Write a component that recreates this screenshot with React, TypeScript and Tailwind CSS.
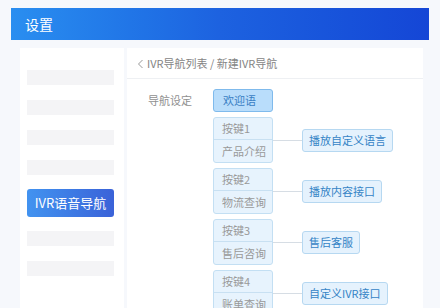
import React from 'react';

const font = { fontFamily: '"Noto Sans CJK SC", "Noto Sans", sans-serif' };

const keys = [
  { key: '按键1', name: '产品介绍', action: '播放自定义语言' },
  { key: '按键2', name: '物流查询', action: '播放内容接口' },
  { key: '按键3', name: '售后咨询', action: '售后客服' },
  { key: '按键4', name: '账单查询', action: '自定义IVR接口' },
];

const Bar = () => <div className="h-[15px] w-[87px] bg-[#f4f4f6]" />;

export default function App() {
  return (
    <div className="w-[440px] h-[308px] overflow-hidden bg-[#f6f8fc] pt-2" style={font}>
      <div className="mx-[11px] h-8 flex items-center px-[14px] bg-gradient-to-r from-[#2a8ef0] via-[#1d62e0] to-[#1546d6]">
        <span className="text-white text-[14px] leading-none">设置</span>
      </div>

      <div className="flex mt-2 ml-5 gap-[3px] h-[260px]">
        {/* sidebar */}
        <div className="w-[104px] bg-white pt-[22px] px-[7px] flex flex-col gap-[15px]">
          <Bar />
          <Bar />
          <Bar />
          <Bar />
          <div className="h-[28px] w-[87px] rounded-[3px] bg-gradient-to-r from-[#4293f0] to-[#3a62d8] flex items-center justify-center text-white text-[13px] -mt-[1px]">
            IVR语音导航
          </div>
          <div className="-mt-[1px]"><Bar /></div>
          <Bar />
        </div>

        {/* main */}
        <div className="w-[296px] bg-white">
          <div className="h-[31px] border-b border-[#eef0f3] flex items-center pl-[10px] text-[11px] text-[#858585] gap-[3px]">
            <svg width="7" height="10" viewBox="0 0 7 10" className="mt-[1px]">
              <path d="M5.5 1 L1.5 5 L5.5 9" fill="none" stroke="#999" strokeWidth="1" />
            </svg>
            <span>IVR导航列表 / 新建IVR导航</span>
          </div>

          <div className="flex pt-[10px]">
            <div className="w-[86px] pl-[21px] h-[23px] flex items-center text-[11px] text-[#909090]">导航设定</div>
            <div className="flex flex-col gap-[5px]">
              <div className="w-[60px] h-[23px] rounded-[3px] bg-[#b9ddfb] border border-[#7fbaec] flex items-center pl-[9px] text-[11px] text-[#3a80c4]">
                欢迎语
              </div>
              {keys.map((k) => (
                <div key={k.key} className="flex items-center">
                  <div className="w-[60px] h-[46px] rounded-[3px] bg-[#e7f3fd] border border-[#c3dff3] flex flex-col text-[11px] text-[#999]">
                    <div className="h-[22px] flex items-center pl-[8px] border-b border-[#c8e0f2]">{k.key}</div>
                    <div className="flex-1 flex items-center pl-[8px]">{k.name}</div>
                  </div>
                  <div className="w-[29px] h-px bg-[#d6dde4]" />
                  <div className="h-[23px] px-[6px] rounded-[3px] bg-[#e5f2fd] border border-[#b6d8f1] flex items-center text-[11px] text-[#3584c6]">
                    {k.action}
                  </div>
                </div>
              ))}
            </div>
          </div>
        </div>
      </div>
    </div>
  );
}
